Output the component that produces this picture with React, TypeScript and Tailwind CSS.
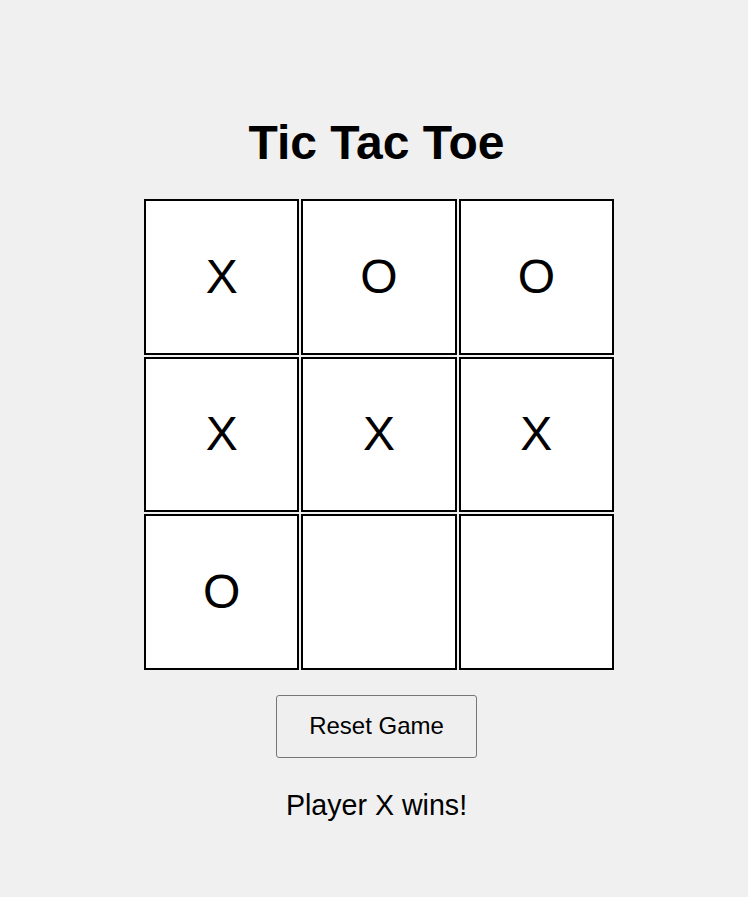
const cells = ["X", "O", "O", "X", "X", "X", "O", "", ""]

const App = () => {
  return (
    <div className="min-h-[897px] bg-[#f0f0f0] font-['Liberation_Sans',Arial,sans-serif] text-black">
      <div className="flex flex-col items-center pt-[115px] pl-[5px]">
        <h1 className="text-[48px] font-bold leading-[55px] mb-[29px]">Tic Tac Toe</h1>
        <div className="grid grid-cols-3 gap-[2px] w-[470px] ml-[5px]">
          {cells.map((value, i) => (
            <div
              key={i}
              className="h-[155.5px] border-2 border-black bg-white flex items-center justify-center text-[48px]"
            >
              {value}
            </div>
          ))}
        </div>
        <button className="mt-[25px] px-8 py-[16.5px] text-[24px] leading-[28px] border border-[#767676] rounded-[3px] bg-[#efefef]">
          Reset Game
        </button>
        <p className="mt-[31px] text-[28.6px] leading-[32px]">Player X wins!</p>
      </div>
    </div>
  )
}

export default App
